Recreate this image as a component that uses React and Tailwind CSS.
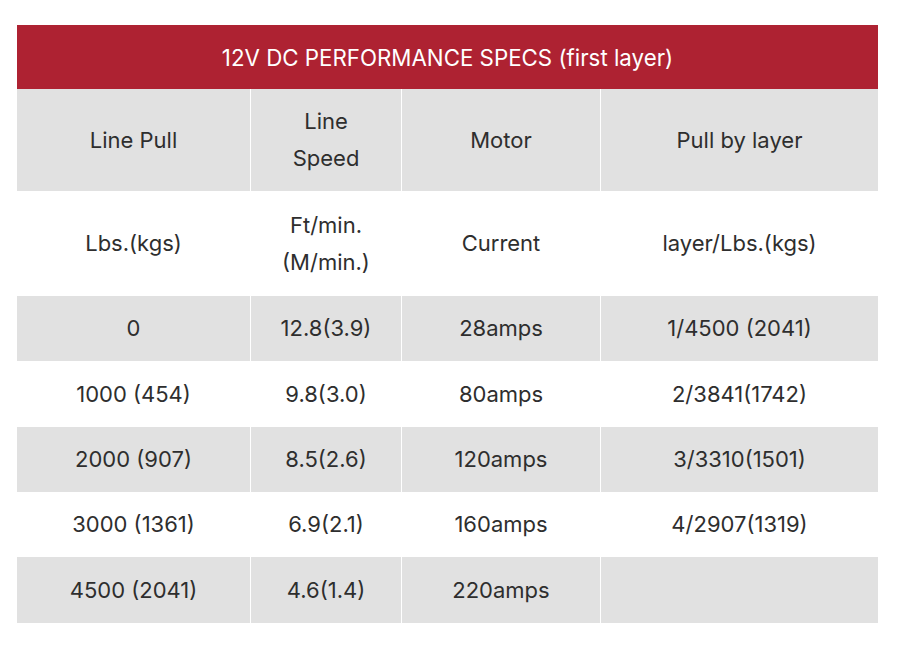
const head1 = ['Line Pull', 'Line\nSpeed', 'Motor', 'Pull by layer']
const head2 = ['Lbs.(kgs)', 'Ft/min.\n(M/min.)', 'Current', 'layer/Lbs.(kgs)']
const rows = [
  ['0', '12.8(3.9)', '28amps', '1/4500 (2041)'],
  ['1000 (454)', '9.8(3.0)', '80amps', '2/3841(1742)'],
  ['2000 (907)', '8.5(2.6)', '120amps', '3/3310(1501)'],
  ['3000 (1361)', '6.9(2.1)', '160amps', '4/2907(1319)'],
  ['4500 (2041)', '4.6(1.4)', '220amps', ''],
]
const widths = ['w-[233px]', 'w-[151px]', 'w-[199px]', 'w-[278px]']

function Row({ cells, gray, height }) {
  return (
    <div className={`flex ${height} ${gray ? 'bg-[#e1e1e1]' : 'bg-white'}`}>
      {cells.map((c, i) => (
        <div
          key={i}
          className={`${widths[i]} flex items-center justify-center whitespace-pre-line text-center leading-[37px] ${i > 0 ? 'border-l border-white' : ''}`}
        >
          {c}
        </div>
      ))}
    </div>
  )
}

export default function App() {
  return (
    <div className="min-h-screen bg-white pt-[25px] pl-[17px] font-['Inter','Open_Sans',sans-serif] text-[22px] text-[#2e2e2e]">
      <div className="w-[861px]">
        <div className="flex h-[64px] items-center justify-center bg-[#ae2232] pt-[2px] text-[22.3px] text-white">
          12V DC PERFORMANCE SPECS (first layer)
        </div>
        <Row cells={head1} gray height="h-[102px]" />
        <Row cells={head2} height="h-[105px]" />
        {rows.map((r, i) => (
          <Row key={i} cells={r} gray={i % 2 === 0} height={i === 4 ? 'h-[66px]' : i === 1 ? 'h-[66px]' : 'h-[65px]'} />
        ))}
      </div>
    </div>
  )
}
